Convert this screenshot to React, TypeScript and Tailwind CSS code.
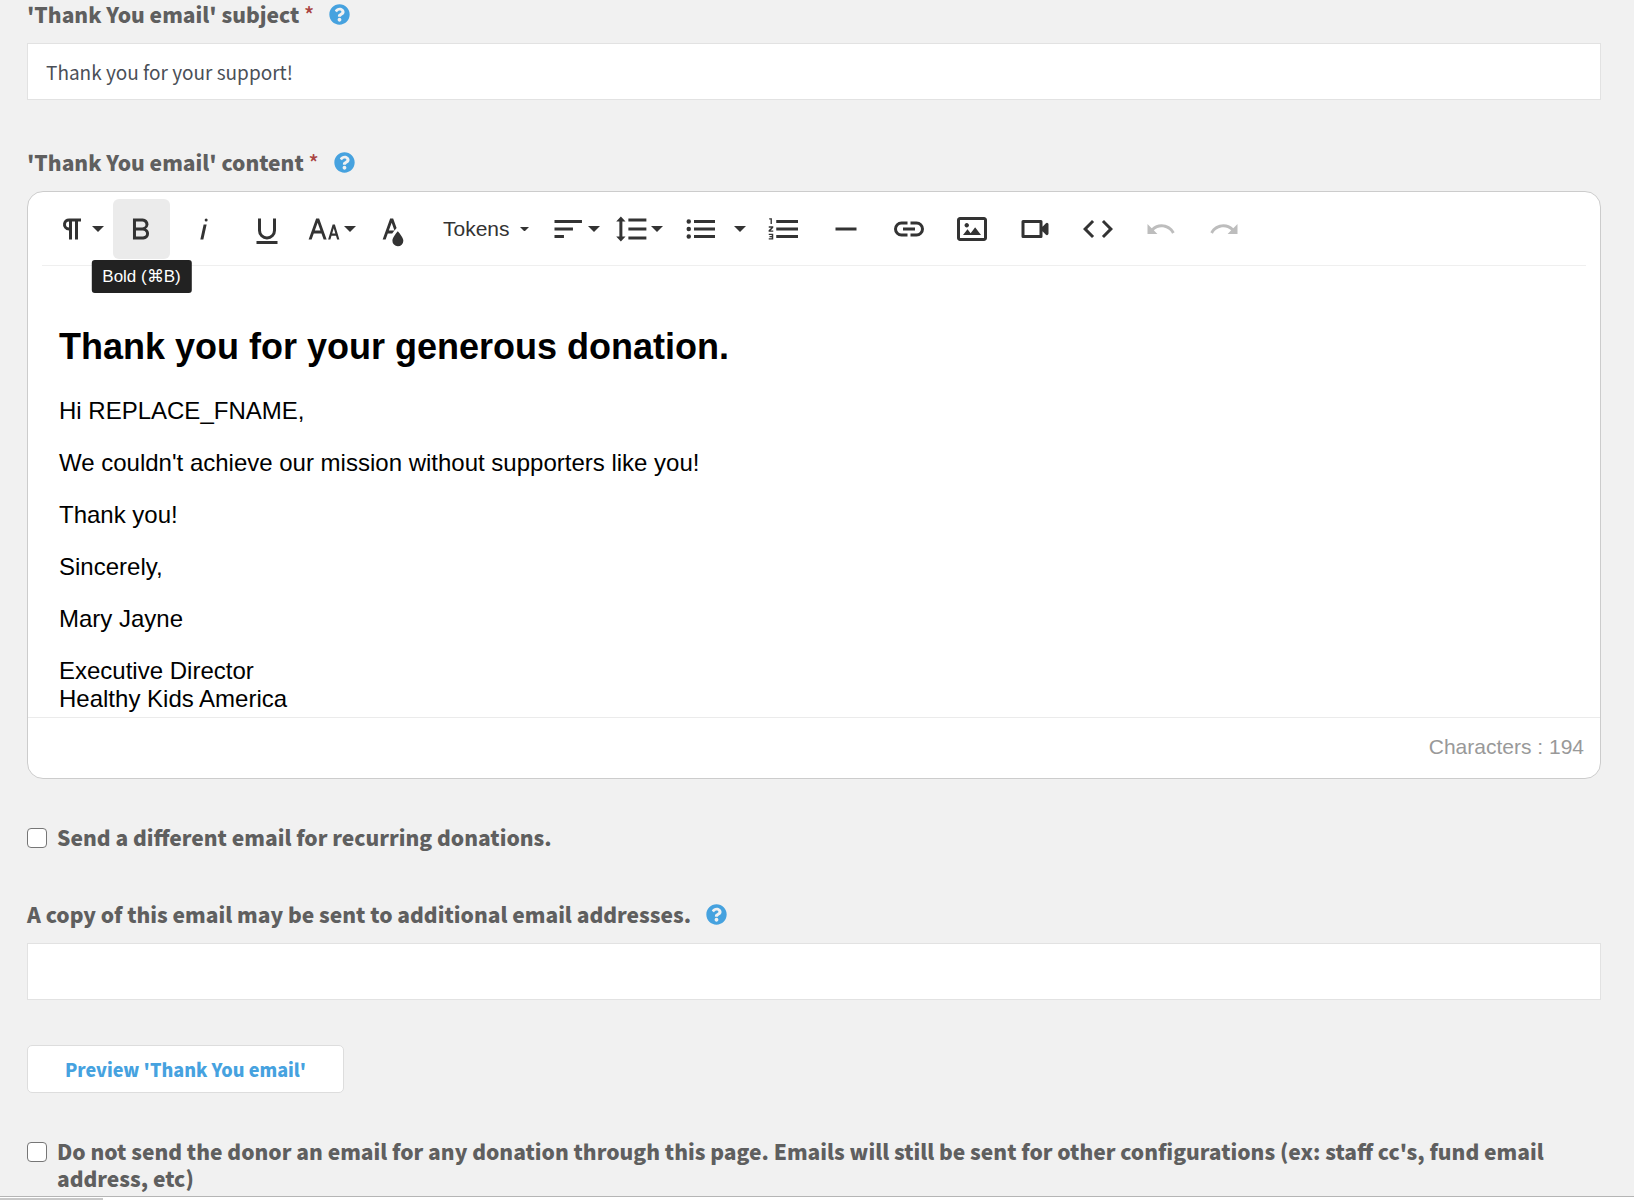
import { ReactNode, useState } from 'react';
import { FaQuestionCircle } from 'react-icons/fa';
import clsx from 'clsx';

const ICONS = {
  paragraph:
    'M10.15,5A4.11,4.11,0,0,0,6.08,8.18,4,4,0,0,0,10,13v6h2V7h2V19h2V7h2V5ZM8,9a2,2,0,0,1,2-2v4A2,2,0,0,1,8,9Z',
  bold: 'M15.25,11.8h0A3.68,3.68,0,0,0,17,9a3.93,3.93,0,0,0-3.86-4H6.65V19h7a3.74,3.74,0,0,0,3.7-3.78V15.1A3.64,3.64,0,0,0,15.25,11.8ZM8.65,7h4.2a2.09,2.09,0,0,1,2,1.3,2.09,2.09,0,0,1-1.37,2.61,2.23,2.23,0,0,1-.63.09H8.65Zm4.6,10H8.65V13h4.6a2.09,2.09,0,0,1,2,1.3,2.09,2.09,0,0,1-1.37,2.61A2.23,2.23,0,0,1,13.25,17Z',
  italic: 'M11.76,9h2l-2.2,10h-2Zm1.68-4a1,1,0,1,0,1,1,1,1,0,0,0-1-1Z',
  underline: 'M19,20v2H5V20ZM6,5H8v8a4,4,0,0,0,8,0V5h2v8a6,6,0,0,1-12,0Z',
  fontSize:
    'M20.75,19h1.5l-3-10h-1.5l-3,10h1.5L17,16.5h3Zm-3.3-4,1.05-3.5L19.55,15Zm-5.7,4h2l-5-14h-2l-5,14h2l1.43-4h5.14ZM5.89,13,7.75,7.8,9.61,13Z',
  textColor:
    'M15.2,13.494s-3.6,3.9-3.6,6.3a3.65,3.65,0,0,0,7.3.1v-.1C18.9,17.394,15.2,13.494,15.2,13.494Zm-1.47-1.357.669-.724L12.1,5h-2l-5,14h2l1.43-4h2.943A24.426,24.426,0,0,1,13.726,12.137ZM11.1,7.8l1.86,5.2H9.244Z',
  align: 'M3,6H21.3V8H3ZM3,11H15.3v2H3ZM3,16H9.3v2H3Z',
  lineHeight:
    'M6.25,7h2.1L5.25,3.7,2.15,7h2.1V17H2.15l3.1,3.3L8.35,17H6.25Zm4-2V7h12V5Zm0,14h12V17h-12Zm0-6h12V11h-12Z',
  bullets:
    'M8,6H22V8H8ZM8,11H22v2H8ZM8,16H22v2H8ZM4.5,5.5a1.5,1.5,0,1,0,0,3,1.5,1.5,0,0,0,0-3Zm0,5a1.5,1.5,0,1,0,0,3,1.5,1.5,0,0,0,0-3Zm0,5a1.5,1.5,0,1,0,0,3,1.5,1.5,0,0,0,0-3Z',
  numbers:
    'M7.5,6H22V8H7.5ZM7.5,11H22v2H7.5ZM7.5,16H22v2H7.5ZM2.8,4.8H4.6V8.6H3.7V5.6H2.8ZM2.5,10.2H5.5V11.2L3.7,13H5.5v.9H2.4V12.9L4.2,11.1H2.5ZM2.5,15.2h3v3.8h-3v-.8H4.5v-.7H3v-.8H4.5V16h-2Z',
  rule: 'M5,11h14v2H5Z',
  link: 'M11,17H7A5,5,0,0,1,7,7h4V9H7a3,3,0,0,0,0,6h4ZM17,7H13V9h4a3,3,0,0,1,0,6H13v2h4A5,5,0,0,0,17,7Zm-1,4H8v2h8Z',
  image:
    'M14.2,11l3.8,5H6l3-3.9l2.1,2.7L14,11H14.2z M8.5,11c0.8,0,1.5-0.7,1.5-1.5S9.3,8,8.5,8S7,8.7,7,9.5C7,10.3,7.7,11,8.5,11z M22,6v12c0,1.1-0.9,2-2,2H4c-1.1,0-2-0.9-2-2V6c0-1.1,0.9-2,2-2h16C21.1,4,22,4.9,22,6z M20,8.8V6H4v12h16V8.8z',
  video:
    'M15,8v8H5V8H15m2,2.5V7a1,1,0,0,0-1-1H4A1,1,0,0,0,3,7V17a1,1,0,0,0,1,1H16a1,1,0,0,0,1-1V13.5l2.29,2.29A1,1,0,0,0,21,15.08V8.91a1,1,0,0,0-1.71-.71Z',
  code: 'M9.4,16.6,4.8,12,9.4,7.4,8,6,2,12l6,6Zm5.2,0L19.2,12,14.6,7.4,16,6l6,6-6,6Z',
  undo: 'M3,8.7V15.3H9.6L7.2,12.9C8.8,11.6,10.4,10.9,12.3,10.9c3,0,5.6,1.5,7.1,4.2l1.7-.9C19.3,10.9,16,8.9,12.3,8.9c-2.5,0-4.7.9-6.5,2.6Z',
  redo: 'M21,8.7V15.3H14.4L16.8,12.9C15.2,11.6,13.6,10.9,11.7,10.9c-3,0-5.6,1.5-7.1,4.2l-1.7-.9C4.7,10.9,8,8.9,11.7,8.9c2.5,0,4.7.9,6.5,2.6Z',
};

type IconName = keyof typeof ICONS;

const Icon = ({ name }: { name: IconName }) => (
  <svg viewBox="0 0 24 24" className="size-9 shrink-0" fill="currentColor" aria-hidden="true">
    <path d={ICONS[name]} />
  </svg>
);

const Caret = ({ small }: { small?: boolean }) => (
  <svg
    viewBox="0 0 12 6"
    className={clsx('shrink-0', small ? 'w-[9px]' : 'w-3')}
    fill="currentColor"
    aria-hidden="true"
  >
    <path d="M0 0h12L6 6z" />
  </svg>
);

interface ToolButtonProps {
  label: string;
  icon: IconName;
  dropdown?: boolean;
  active?: boolean;
  disabled?: boolean;
  tooltip?: string;
  onClick?: () => void;
}

const ToolButton = ({ label, icon, dropdown, active, disabled, tooltip, onClick }: ToolButtonProps) => (
  <div className="relative">
    <button
      type="button"
      aria-label={label}
      disabled={disabled}
      onClick={onClick}
      className={clsx(
        'flex h-[60px] w-[57px] items-center gap-0.5 rounded-md',
        dropdown ? 'pl-1' : 'pl-2.5',
        active && 'bg-[#ebebeb]',
        disabled && 'text-[#bdbdbd]'
      )}
    >
      <Icon name={icon} />
      {dropdown && <Caret />}
    </button>
    {tooltip && (
      <span
        role="tooltip"
        className="absolute top-full left-1/2 z-10 mt-px -translate-x-1/2 rounded-[3px] bg-[#222] px-[11px] py-1 text-[17px] leading-[25px] whitespace-nowrap text-white"
      >
        {tooltip}
      </span>
    )}
  </div>
);

const HelpButton = ({ label }: { label: string }) => (
  <button type="button" aria-label={label} className="text-[#46a2df]">
    <FaQuestionCircle className="size-[21px]" />
  </button>
);

interface FieldLabelProps {
  id?: string;
  htmlFor: string;
  required?: boolean;
  help: string;
  children: ReactNode;
}

const FieldLabel = ({ id, htmlFor, required, help, children }: FieldLabelProps) => (
  <div className="mb-[15px] flex items-center gap-[15px]">
    <label id={id} htmlFor={htmlFor} className="text-[21px] leading-[27px] font-black">
      {children}
      {required && <span className="font-medium text-[#a94442]"> *</span>}
    </label>
    <HelpButton label={help} />
  </div>
);

interface CheckFieldProps {
  id: string;
  children: ReactNode;
}

const CheckField = ({ id, children }: CheckFieldProps) => (
  <div className="flex items-start gap-2.5">
    <input
      id={id}
      type="checkbox"
      className="mt-1 size-5 shrink-0 appearance-none rounded-[4px] border border-[#767676] bg-white checked:bg-[#46a2df]"
    />
    <label htmlFor={id} className="text-[21px] leading-[27px] font-black">
      {children}
    </label>
  </div>
);

const inputClass =
  'block h-[57px] w-full border border-[#e2e2e2] bg-white px-[18px] text-[19px] text-[#4a4f57] outline-none';

const App = () => {
  const [subject, setSubject] = useState('Thank you for your support!');
  const [copies, setCopies] = useState('');
  const [bold, setBold] = useState(true);

  return (
    <div className="flex min-h-screen flex-col bg-[#f1f1f1] font-['Noto_Sans_CJK_JP',sans-serif] text-[#5f5f5f]">
      <form className="grow pt-px pr-[33px] pl-[27px]" onSubmit={(e) => e.preventDefault()}>
        {/* Subject */}
        <FieldLabel htmlFor="subject" required help="About the email subject">
          'Thank You email' subject
        </FieldLabel>
        <input
          id="subject"
          type="text"
          value={subject}
          onChange={(e) => setSubject(e.target.value)}
          className={inputClass}
        />

        {/* Content editor */}
        <div className="mt-[49px]">
          <FieldLabel id="content-label" htmlFor="content" required help="About the email content">
            'Thank You email' content
          </FieldLabel>
          <div className="rounded-2xl border border-[#ccc] bg-white font-['Liberation_Sans',Arial,sans-serif]">
            <div className="mx-3.5 flex flex-wrap gap-x-1.5 border-b border-[#efefef] px-2 pt-[7px] pb-1.5 text-[#333]">
              <ToolButton label="Paragraph format" icon="paragraph" dropdown />
              <ToolButton
                label="Bold"
                icon="bold"
                active={bold}
                tooltip="Bold (⌘B)"
                onClick={() => setBold(!bold)}
              />
              <ToolButton label="Italic" icon="italic" />
              <ToolButton label="Underline" icon="underline" />
              <ToolButton label="Font size" icon="fontSize" dropdown />
              <ToolButton label="Text color" icon="textColor" />
              <button type="button" className="flex h-[60px] w-28 items-center gap-2.5 pl-[15px] text-[21px]">
                Tokens
                <Caret small />
              </button>
              <ToolButton label="Align" icon="align" dropdown />
              <ToolButton label="Line height" icon="lineHeight" dropdown />
              <div className="flex">
                <ToolButton label="Unordered list" icon="bullets" />
                <button
                  type="button"
                  aria-label="Unordered list options"
                  className="flex h-[60px] w-5 items-center justify-end pr-[3px]"
                >
                  <Caret />
                </button>
              </div>
              <ToolButton label="Ordered list" icon="numbers" />
              <ToolButton label="Horizontal line" icon="rule" />
              <ToolButton label="Insert link" icon="link" />
              <ToolButton label="Insert image" icon="image" />
              <ToolButton label="Insert video" icon="video" />
              <ToolButton label="Code view" icon="code" />
              <ToolButton label="Undo" icon="undo" disabled />
              <ToolButton label="Redo" icon="redo" disabled />
            </div>

            <div
              id="content"
              role="textbox"
              aria-multiline="true"
              aria-labelledby="content-label"
              contentEditable
              suppressContentEditableWarning
              className="px-[31px] pt-[60px] pb-1 text-2xl leading-7 text-black outline-none"
            >
              <h1 className="mb-[29px] text-4xl leading-[42px] font-bold">Thank you for your generous donation.</h1>
              <div className="space-y-6">
                <p>Hi REPLACE_FNAME,</p>
                <p>We couldn't achieve our mission without supporters like you!</p>
                <p>Thank you!</p>
                <p>Sincerely,</p>
                <p>Mary Jayne</p>
                <p>
                  Executive Director
                  <br />
                  Healthy Kids America
                </p>
              </div>
            </div>

            <div className="border-t border-[#ebebeb] px-4 pt-4 pb-[18px] text-right text-[21px] leading-[26px] text-[#999]">
              Characters : 194
            </div>
          </div>
        </div>

        <div className="mt-[45px]">
          <CheckField id="recurring">Send a different email for recurring donations.</CheckField>
        </div>

        {/* Copies */}
        <div className="mt-[50px]">
          <FieldLabel htmlFor="copies" help="About additional email addresses">
            A copy of this email may be sent to additional email addresses.
          </FieldLabel>
          <input
            id="copies"
            type="text"
            value={copies}
            onChange={(e) => setCopies(e.target.value)}
            className={inputClass}
          />
        </div>

        <button
          type="button"
          className="mt-[45px] block h-12 rounded-[5px] border border-[#ddd] bg-white px-[37px] text-lg leading-7 font-black text-[#46a2df]"
        >
          Preview 'Thank You email'
        </button>

        <div className="mt-[45px]">
          <CheckField id="no-email">
            Do not send the donor an email for any donation through this page. Emails will still be sent for other
            configurations (ex: staff cc's, fund email address, etc)
          </CheckField>
        </div>
      </form>

      <div className="h-1 border-t border-[#b5b5b5] bg-white pt-px">
        <div className="h-full w-[103px] bg-[#c8c8c8]" />
      </div>
    </div>
  );
};

export default App;
